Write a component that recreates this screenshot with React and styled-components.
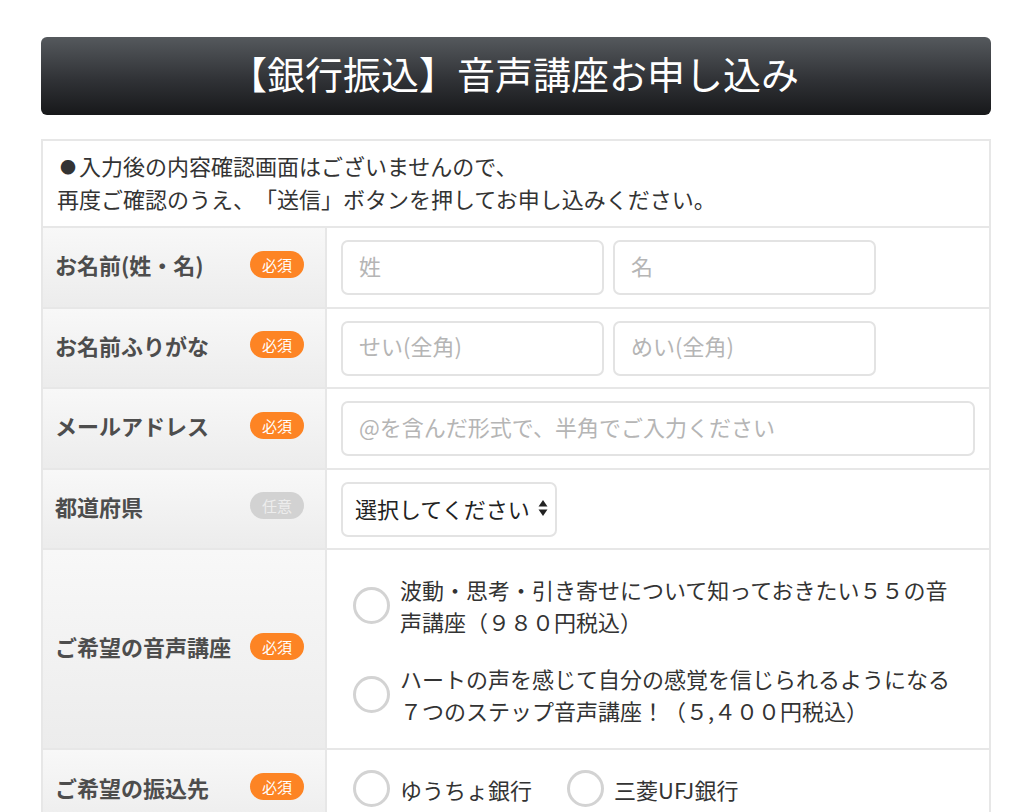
import styled, { createGlobalStyle } from "styled-components"

const GlobalStyle = createGlobalStyle`
  body {
    margin: 0;
    background: #fff;
    font-family: "Noto Sans CJK JP", "Noto Sans", sans-serif;
    color: #333;
    text-spacing-trim: space-all;
  }
`

const fields = [
  { label: "お名前(姓・名)", required: true, kind: "pair", placeholders: ["姓", "名"] },
  { label: "お名前ふりがな", required: true, kind: "pair", placeholders: ["せい(全角)", "めい(全角)"] },
  { label: "メールアドレス", required: true, kind: "wide", placeholders: ["@を含んだ形式で、半角でご入力ください"] },
  { label: "都道府県", required: false, kind: "select" },
]

const courses = [
  ["波動・思考・引き寄せについて知っておきたい５５の音", "声講座（９８０円税込）"],
  ["ハートの声を感じて自分の感覚を信じられるようになる", "７つのステップ音声講座！（５,４００円税込）"],
]

const banks = ["ゆうちょ銀行", "三菱UFJ銀行"]

const SortArrows = () => (
  <svg width="10" height="18" viewBox="0 0 10 18">
    <path d="M5 1 L9.5 7.5 H0.5 Z" fill="#222" />
    <path d="M5 17 L9.5 10.5 H0.5 Z" fill="#222" />
  </svg>
)

const App = () => {
  return (
    <Page>
      <GlobalStyle />
      <Header>
        <h1>【銀行振込】音声講座お申し込み</h1>
      </Header>
      <FormTable>
        <Notice>
          <Bullet>●</Bullet>入力後の内容確認画面はございませんので、
          <br />
          再度ご確認のうえ、「送信」ボタンを押してお申し込みください。
        </Notice>
        {fields.map((f) => (
          <Row key={f.label}>
            <LabelCell>
              <span>{f.label}</span>
              <Badge $required={f.required}>{f.required ? "必須" : "任意"}</Badge>
            </LabelCell>
            <FieldCell>
              {f.kind === "pair" &&
                f.placeholders.map((p) => <TextInput key={p} placeholder={p} />)}
              {f.kind === "wide" && <TextInput $wide placeholder={f.placeholders[0]} />}
              {f.kind === "select" && (
                <SelectBox>
                  <span>選択してください</span>
                  <SortArrows />
                </SelectBox>
              )}
            </FieldCell>
          </Row>
        ))}
        <Row>
          <LabelCell>
            <span>ご希望の音声講座</span>
            <Badge $required>必須</Badge>
          </LabelCell>
          <ChoiceCell>
            {courses.map((lines) => (
              <Choice key={lines[0]}>
                <RadioCircle />
                <ChoiceText>
                  {lines[0]}
                  <br />
                  {lines[1]}
                </ChoiceText>
              </Choice>
            ))}
          </ChoiceCell>
        </Row>
        <Row>
          <LabelCell>
            <span>ご希望の振込先</span>
            <Badge $required>必須</Badge>
          </LabelCell>
          <BankCell>
            {banks.map((b) => (
              <Choice key={b}>
                <RadioCircle />
                <ChoiceText>{b}</ChoiceText>
              </Choice>
            ))}
          </BankCell>
        </Row>
      </FormTable>
    </Page>
  )
}

const Page = styled.div`
  padding: 37px 33px 40px 41px;
`

const Header = styled.div`
  height: 78px;
  border-radius: 6px;
  background: linear-gradient(to bottom, #55595d 0%, #303236 55%, #17181a 100%);
  display: flex;
  align-items: center;
  justify-content: center;
  h1 {
    margin: 0;
    color: #fff;
    font-size: 38px;
    font-weight: 400;
    line-height: 1;
    padding: 0 4px 7px 0;
  }
`

const FormTable = styled.div`
  margin-top: 24px;
  border: 2px solid #e7e7e7;
  border-bottom: none;
`

const Notice = styled.div`
  padding: 8px 14px 12px;
  font-size: 22px;
  line-height: 32px;
  color: #333;
  border-bottom: 2px solid #e7e7e7;
`

const Bullet = styled.span`
  display: inline-block;
  width: 22px;
  font-size: 16px;
  text-align: center;
  vertical-align: 2px;
`

const Row = styled.div`
  display: grid;
  grid-template-columns: 284px 1fr;
  border-bottom: 2px solid #e7e7e7;
`

const LabelCell = styled.div`
  display: flex;
  align-items: center;
  justify-content: space-between;
  padding: 0 21px 6px 12px;
  background: linear-gradient(to bottom, #f8f8f8 0%, #ececec 100%);
  border-right: 2px solid #e7e7e7;
  font-size: 22px;
  font-weight: 700;
  color: #4d4d4d;
`

const Badge = styled.span`
  width: 54px;
  height: 27px;
  border-radius: 14px;
  display: flex;
  align-items: center;
  justify-content: center;
  font-size: 15px;
  font-weight: 400;
  background: ${(p) => (p.$required ? "#fd8424" : "#d2d2d2")};
  color: ${(p) => (p.$required ? "#fff" : "#ededed")};
`

const FieldCell = styled.div`
  display: flex;
  gap: 9px;
  padding: 12px 14px 11.5px;
`

const TextInput = styled.input`
  box-sizing: border-box;
  width: ${(p) => (p.$wide ? "100%" : "263px")};
  height: 55px;
  border: 2px solid #e3e3e3;
  border-radius: 7px;
  padding: 0 16px 6px;
  font-family: inherit;
  font-size: 22px;
  color: #333;
  background: #fff;
  outline: none;
  &::placeholder {
    color: #b5b5b5;
  }
`

const SelectBox = styled.div`
  box-sizing: border-box;
  width: 216px;
  height: 55px;
  border: 2px solid #e3e3e3;
  border-radius: 7px;
  padding: 0 7px 2px 12px;
  display: flex;
  align-items: center;
  justify-content: space-between;
  font-size: 22px;
  color: #222;
`

const ChoiceCell = styled.div`
  display: flex;
  flex-direction: column;
  gap: 25px;
  padding: 23px 14px 22px 26px;
`

const BankCell = styled.div`
  display: flex;
  gap: 35px;
  padding: 20px 14px 22px 26px;
`

const Choice = styled.label`
  display: flex;
  align-items: center;
  gap: 10px;
`

const RadioCircle = styled.span`
  flex: none;
  box-sizing: border-box;
  width: 37px;
  height: 37px;
  border-radius: 50%;
  border: 3px solid #d3d3d3;
  background: #fff;
`

const ChoiceText = styled.span`
  font-size: 22px;
  line-height: 32px;
  color: #333;
`

export default App
